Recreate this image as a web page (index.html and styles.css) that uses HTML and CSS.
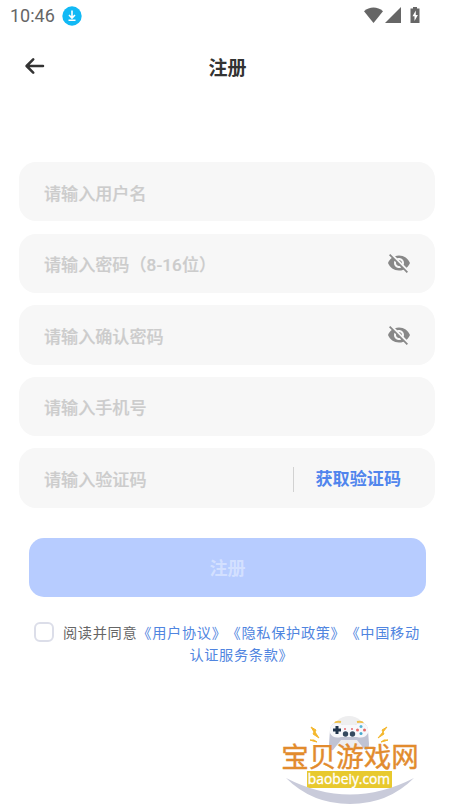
FILE: index.html
```html
<!DOCTYPE html>
<html lang="zh-CN">
<head>
    <meta charset="UTF-8">
    <meta name="viewport" content="width=device-width, initial-scale=1.0">
    <title>注册</title>
    <link rel="stylesheet" href="styles.css">
</head>
<body>
    <div class="status-bar">
        <span class="time">10:46</span>
        <svg class="download" viewBox="0 0 20 20">
            <circle cx="10" cy="10" r="9.7" fill="#12b9f5"/>
            <path d="M10 4.5v7M7 9l3 3 3-3M6.5 14.3h7" fill="none" stroke="#fff" stroke-width="1.6"/>
        </svg>
        <svg class="signals" viewBox="0 0 57 18">
            <path d="M0 4.2C5.5-.6 13.5-.6 19 4.2L9.5 16z"/>
            <path d="M37 0v16H21z"/>
            <path d="M49 0h4v1.5h2.500V16h-9V1.500H49z"/>
            <path d="M51.8 3.500l-3.300 5.800h2v4.700l3.400-6h-2.100z" fill="#fff"/>
        </svg>
    </div>

    <header class="nav">
        <svg class="back" viewBox="0 0 20 18">
            <path d="M18 9H2M8.200 2.300L1.600 9l6.600 6.700" fill="none" stroke="#333" stroke-width="2.500" stroke-linecap="round" stroke-linejoin="round"/>
        </svg>
        <h1>注册</h1>
    </header>

    <main class="form">
        <div class="field"><span class="placeholder">请输入用户名</span></div>
        <div class="field">
            <span class="placeholder">请输入密码（<span class="digits">8-16</span>位）</span>
            <svg class="eye" viewBox="0 0 24 24"><path d="M12 7c2.760 0 5 2.240 5 5 0 .65-.13 1.260-.36 1.830l2.920 2.920c1.510-1.260 2.700-2.890 3.430-4.750-1.730-4.390-6-7.500-11-7.500-1.400 0-2.740.25-3.980.7l2.160 2.160C10.740 7.130 11.350 7 12 7zM2 4.270l2.280 2.280.46.460C3.080 8.300 1.780 10.020 1 12c1.730 4.390 6 7.500 11 7.500 1.550 0 3.030-.3 4.380-.84l.42.420L19.730 22 21 20.730 3.270 3 2 4.270zM7.530 9.800l1.550 1.550c-.05.210-.08.430-.08.650 0 1.660 1.340 3 3 3 .22 0 .44-.03.650-.08l1.550 1.550c-.67.330-1.410.530-2.200.530-2.760 0-5-2.240-5-5 0-.79.200-1.530.530-2.200zm4.310-.78l3.150 3.150.02-.16c0-1.660-1.340-3-3-3l-.17.010z"/></svg>
        </div>
        <div class="field">
            <span class="placeholder">请输入确认密码</span>
            <svg class="eye" viewBox="0 0 24 24"><path d="M12 7c2.760 0 5 2.240 5 5 0 .65-.13 1.260-.36 1.830l2.920 2.920c1.510-1.260 2.700-2.890 3.430-4.750-1.730-4.390-6-7.500-11-7.500-1.400 0-2.740.25-3.980.7l2.160 2.160C10.740 7.130 11.350 7 12 7zM2 4.270l2.280 2.280.46.460C3.080 8.300 1.780 10.020 1 12c1.730 4.390 6 7.500 11 7.500 1.550 0 3.030-.3 4.380-.84l.42.420L19.730 22 21 20.730 3.270 3 2 4.270zM7.530 9.800l1.550 1.550c-.05.210-.08.430-.08.650 0 1.660 1.340 3 3 3 .22 0 .44-.03.650-.08l1.550 1.550c-.67.330-1.410.530-2.200.530-2.760 0-5-2.240-5-5 0-.79.200-1.530.530-2.200zm4.310-.78l3.150 3.150.02-.16c0-1.660-1.340-3-3-3l-.17.010z"/></svg>
        </div>
        <div class="field"><span class="placeholder">请输入手机号</span></div>
        <div class="field">
            <span class="placeholder">请输入验证码</span>
            <a class="get-code">获取验证码</a>
        </div>
    </main>

    <button class="submit" disabled>注册</button>

    <div class="agreement">
        <span class="checkbox"></span>
        <p>阅读并同意<a>《用户协议》《隐私保护政策》《中国移动<br>认证服务条款》</a></p>
    </div>

    <footer class="brand">
        <svg class="gamepad" viewBox="0 0 80 36">
            <circle cx="39" cy="18" r="17" fill="#eeeeef"/>
            <path d="M25 8q1-2 6-1M53 8q-1-2-6-1" fill="none" stroke="#efc04c" stroke-width="2"/>
            <path d="M26 8Q21 8 20 15L19 29q0 7 4 6l8-10h16l8 10q4 1 4-6l-1-14q-1-7-6-7-4 0-7 2H33q-3-2-7-2z" fill="#c0c3d3"/>
            <path d="M26 8q-7 1-6 10 3 6 11 4h16q8 2 11-4 1-9-6-10-4 0-7 2H33q-3-2-7-2z" fill="#f7f8fb"/>
            <path d="M27 11v8M23 15h8" stroke="#22364d" stroke-width="3"/>
            <circle cx="35.500" cy="19" r="2.700" fill="#34495e"/>
            <circle cx="42.500" cy="19" r="2.700" fill="#34495e"/>
            <path d="M34 14h2M41 14h2" stroke="#e46770" stroke-width="1.500"/>
            <circle cx="51" cy="11.500" r="1.500" fill="#58b6d8"/>
            <circle cx="47.500" cy="15" r="1.500" fill="#e56b6b"/>
            <circle cx="54.500" cy="15" r="1.500" fill="#e56b6b"/>
            <circle cx="51" cy="18.500" r="1.500" fill="#49a9cd"/>
            <path d="M1 12l5 3-1 2 4 6-6-4 1-2zM0 25l4 0 3 2-4-1zM77 12l-5 3 1 2-5 6 6-4-1-2zM78 25l-4 0-3 2 4-1z" fill="#f4b72c" stroke="#f4b72c"/>
        </svg>
        <div class="brand-name">宝贝游戏网</div>
        <div class="brand-url">baobeiy.com</div>
        <svg class="swoosh" viewBox="0 0 128 28"><path d="M0 0Q64 33 128 0Q102 26 64 26T0 0z" fill="#c9cbda"/></svg>
    </footer>
</body>
</html>
```
FILE: styles.css
```css
* {
    box-sizing: border-box;
}

body {
    margin: 0;
    height: 809px;
    overflow: hidden;
    background-color: #fff;
    font-family: Roboto, "Noto Sans CJK SC", sans-serif;
    color: #333;
    text-spacing-trim: space-all;
}

svg {
    display: block;
    flex-shrink: 0;
}

.status-bar {
    display: flex;
    align-items: center;
    height: 31px;
    padding: 0 34px 0 10px;
}

.time {
    font-size: 18px;
    line-height: 31px;
    color: #666;
}

.download {
    width: 20px;
    height: 20px;
    margin-left: 7px;
}

.signals {
    width: 57px;
    height: 18px;
    margin-left: auto;
    fill: #666;
}

.nav {
    display: grid;
    grid-template-columns: 20px 1fr 20px;
    align-items: center;
    height: 70px;
    padding: 0 25px;
}

.back {
    width: 20px;
    height: 18px;
}

h1 {
    margin: 0;
    padding-top: 5px;
    text-align: center;
    font-size: 19px;
    line-height: 28px;
    font-weight: 700;
}

.form {
    display: flex;
    flex-direction: column;
    gap: 12.2px;
    margin: 61px 20px 0 19px;
}

.field {
    display: flex;
    align-items: center;
    justify-content: space-between;
    height: 59.4px;
    padding: 2px 24px 0 25px;
    border-radius: 17px;
    background-color: #f7f7f7;
}

.placeholder {
    padding-top: 2px;
    font-size: 17.1px;
    line-height: 26px;
    font-weight: 500;
    color: #ccc;
    -webkit-text-stroke: 0.2px #ccc;
}

.digits {
    letter-spacing: 0.1px;
}

.eye {
    width: 24px;
    height: 24px;
    margin-bottom: 2px;
    fill: #888;
}

.get-code {
    padding: 0 10px 0 22px;
    border-left: 1px solid #d2d2d2;
    font-size: 17.1px;
    line-height: 25px;
    font-weight: 700;
    color: #5085ed;
}

.submit {
    display: block;
    width: 397px;
    height: 59px;
    margin: 30px auto 0;
    padding: 0;
    border: none;
    border-radius: 15px;
    background-color: #b7ccff;
    font-family: inherit;
    font-size: 18px;
    font-weight: 700;
    color: #d3e0ff;
}

.agreement {
    display: flex;
    margin: 25px 0 0 34px;
}

.checkbox {
    width: 20px;
    height: 20px;
    margin: 0 9px 0 0;
    border: 2px solid #dcdee9;
    border-radius: 6px;
}

.agreement p {
    margin: 0;
    font-size: 14.2px;
    letter-spacing: 0.68px;
    line-height: 22px;
    text-align: center;
    color: #666;
    white-space: nowrap;
}

.agreement a {
    color: #5085e0;
}

.brand {
    display: flex;
    flex-direction: column;
    align-items: center;
    width: 140px;
    margin: 49px 0 0 280px;
}

.gamepad {
    width: 80px;
    height: 36px;
}

.brand-name {
    margin-top: -7px;
    font-size: 27.5px;
    line-height: 28px;
    font-weight: 400;
    color: #e28b2d;
    white-space: nowrap;
    -webkit-text-stroke: 0.4px #e28b2d;
}

.brand-url {
    width: 85px;
    height: 17px;
    margin: -1px 2px 0 0;
    background-color: #e8c92e;
    font-family: "Open Sans", sans-serif;
    font-size: 13.8px;
    line-height: 15px;
    font-weight: 400;
    text-align: center;
    color: #fff;
    -webkit-text-stroke: 0.3px #fff;
}

.swoosh {
    width: 128px;
    height: 28px;
    margin-top: -10px;
}
```
